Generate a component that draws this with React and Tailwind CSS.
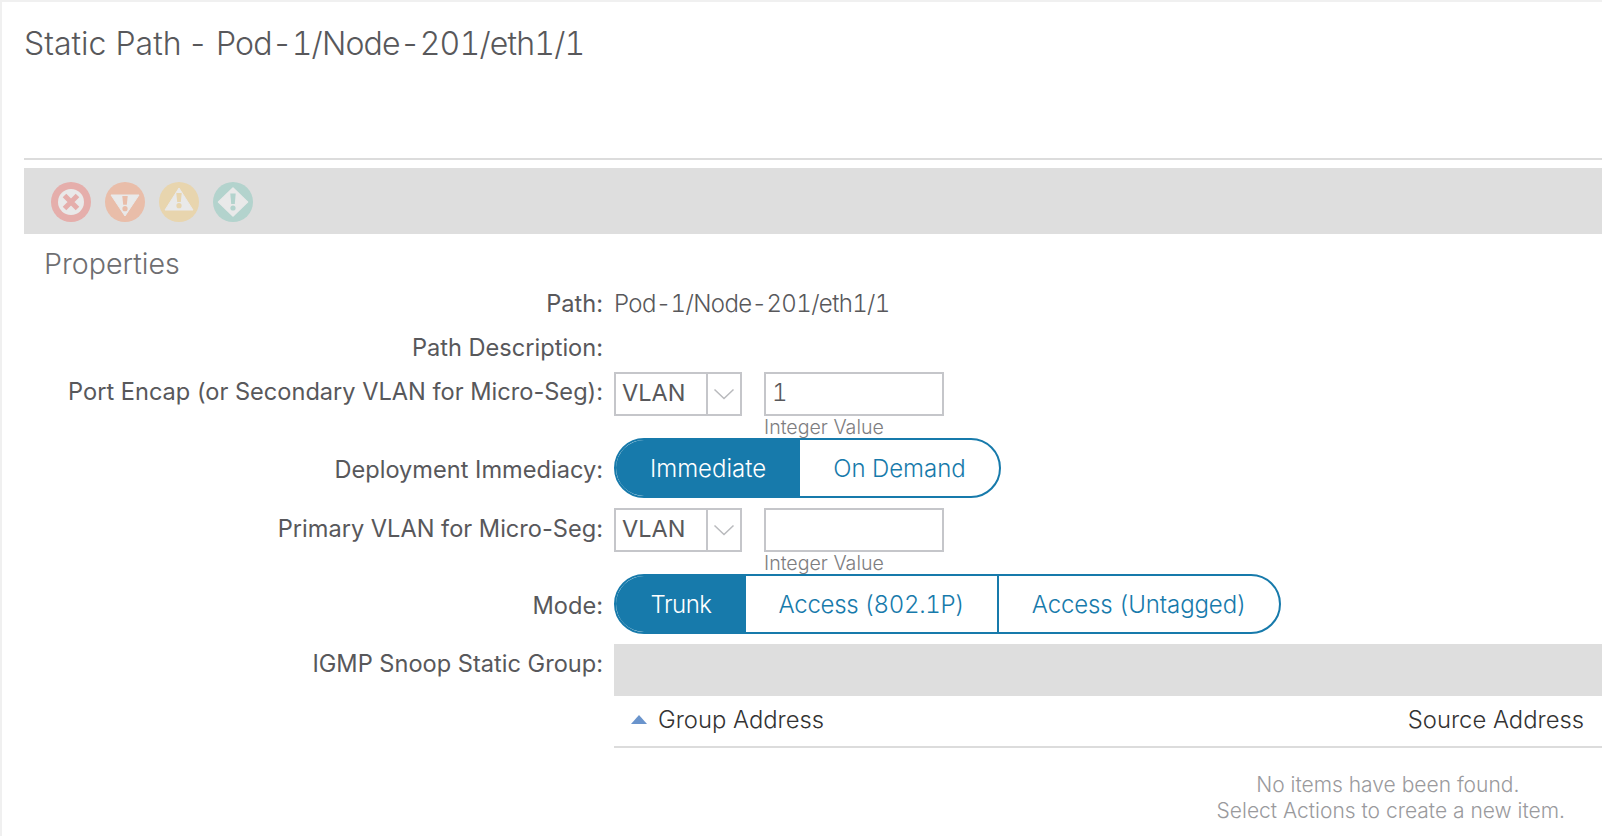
import React from "react";

const font = "font-['Inter','Liberation_Sans',sans-serif]";

const StatusIcon = ({ bg, children }) => (
  <svg width="40" height="40" viewBox="0 0 40 40">
    <circle cx="20" cy="20" r="20" fill={bg} />
    {children}
  </svg>
);

const FormRow = ({ label, className = "", labelClass = "", children }) => (
  <div className={`flex ${className}`}>
    <div className={`w-[579px] shrink-0 text-right text-[23.6px] leading-[30px] font-normal text-[#58585b] ${labelClass}`}>
      {label}
    </div>
    <div className="ml-[11px] min-w-0 flex-1">{children}</div>
  </div>
);

const EncapField = ({ value }) => (
  <div className="flex items-start">
    <div className="flex h-[44px] w-[128px] border-2 border-[#c5c6ca]">
      <div className="flex-1 pl-[6px] text-[23.5px] leading-[38px] text-[#58585b]">VLAN</div>
      <div className="flex w-[34px] items-center justify-center border-l-2 border-[#c5c6ca]">
        <svg width="22" height="12" viewBox="0 0 22 12" fill="none">
          <path d="M1.5 1.5 11 10.5 20.5 1.5" stroke="#b9babd" strokeWidth="1.5" />
        </svg>
      </div>
    </div>
    <div className="ml-[22px]">
      <div className="h-[44px] w-[180px] border-2 border-[#c5c6ca] pl-[6px] text-[24px] leading-[38px] font-light text-[#58585b] tabular-nums">
        {value}
      </div>
      <div className="h-[22px] text-[19.6px] leading-[22px] font-light text-[#7d7d80]">Integer Value</div>
    </div>
  </div>
);

const Toggle = ({ options }) => (
  <div className="flex h-[60px] w-fit overflow-hidden rounded-full border-2 border-[#177aab] text-[24px] font-light tabular-nums">
    {options.map((o) => (
      <div
        key={o.label}
        className={`flex items-center justify-center pt-[1px] ${o.width} ${o.track || ""} ${
          o.active ? "bg-[#177aab] text-white" : "text-[#177aab]"
        } ${o.divider ? "border-l-2 border-[#177aab]" : ""}`}
      >
        {o.label}
      </div>
    ))}
  </div>
);

export default function App() {
  return (
    <div className={`h-[836px] w-[1602px] overflow-hidden border-t-2 border-l-2 border-[#f0f0f0] bg-white ${font}`}>
      <div className="pl-[22px]">
        <h1 className="h-[156px] pt-[20px] text-[32px] leading-[44px] font-light text-[#58585b]">
          Static Path - <span className="ml-[2px] tracking-[-0.8px] tabular-nums">Pod-1/Node-201/eth1/1</span>
        </h1>
        <div className="h-[2px] bg-[#dcdcdc]" />
        <div className="mt-[8px] flex h-[66px] items-center gap-[14px] bg-[#dedede] pt-[1px] pl-[27px]">
          <StatusIcon bg="#e5aeab">
            <circle cx="20" cy="20" r="13" fill="#e9e9e9" />
            <path d="M13.5 13.5 26.5 26.5M26.5 13.5 13.5 26.5" stroke="#e5aeab" strokeWidth="5" />
          </StatusIcon>
          <StatusIcon bg="#e9bda9">
            <path d="M6 13H34L20 34Z" fill="#e9e9e9" stroke="#e9e9e9" strokeWidth="1" strokeLinejoin="round" />
            <path d="M17.3 14H22.7L21.8 22.8H18.2Z" fill="#e9bda9" />
            <circle cx="20" cy="26.7" r="2.6" fill="#e9bda9" />
          </StatusIcon>
          <StatusIcon bg="#e8d5ae">
            <path d="M20 6 34 28H6Z" fill="#e9e9e9" stroke="#e9e9e9" strokeWidth="1" strokeLinejoin="round" />
            <path d="M17.3 11H22.7L21.8 20H18.2Z" fill="#e8d5ae" />
            <circle cx="20" cy="23.7" r="2.6" fill="#e8d5ae" />
          </StatusIcon>
          <StatusIcon bg="#b3d3cd">
            <path d="M20 6 34.5 20 20 34 5.5 20Z" fill="#e9e9e9" stroke="#e9e9e9" strokeWidth="1.5" strokeLinejoin="round" />
            <path d="M17.3 11.5H22.7L21.8 22H18.2Z" fill="#b3d3cd" />
            <circle cx="20" cy="26" r="2.6" fill="#b3d3cd" />
          </StatusIcon>
        </div>
        <div className="mt-[12px] h-[36px] pl-[20px] text-[28.6px] leading-[36px] font-light text-[#6e6e71]">Properties</div>

        <FormRow label="Path:" className="mt-[7px] h-[44px]">
          <div className="text-[24px] leading-[30px] font-light tracking-[-0.63px] text-[#58585b] tabular-nums">
            Pod-1/Node-201/eth1/1
          </div>
        </FormRow>
        <FormRow label="Path Description:" className="h-[39px]" />
        <FormRow label="Port Encap (or Secondary VLAN for Micro-Seg):" className="h-[66px]" labelClass="pt-[5px]">
          <EncapField value="1" />
        </FormRow>
        <FormRow label="Deployment Immediacy:" className="h-[70px]" labelClass="pt-[17px]">
          <Toggle
            options={[
              { label: "Immediate", width: "w-[184px]", active: true },
              { label: "On Demand", width: "w-[199px]" },
            ]}
          />
        </FormRow>
        <FormRow label="Primary VLAN for Micro-Seg:" className="h-[66px]" labelClass="pt-[6px]">
          <EncapField value="" />
        </FormRow>
        <FormRow label="Mode:" className="h-[70px]" labelClass="pt-[17px]">
          <Toggle
            options={[
              { label: "Trunk", width: "w-[130px]", active: true, track: "tracking-[-0.5px]" },
              { label: "Access (802.1P)", width: "w-[251px]", track: "tracking-[-0.3px]" },
              { label: "Access (Untagged)", width: "w-[282px]", track: "tracking-[-0.1px]", divider: true },
            ]}
          />
        </FormRow>
        <FormRow label="IGMP Snoop Static Group:" labelClass="pt-[5px]">
          <div className="h-[52px] bg-[#dedede]" />
          <div className="flex h-[52px] items-center justify-between border-b-2 border-[#dcdcdc] pr-[18px] pb-[3px] pl-[17px] text-[23.8px] font-light text-[#333]">
            <div className="flex items-center gap-[11px]">
              <svg width="16" height="9" viewBox="0 0 16 9">
                <path d="M8 0 16 9H0Z" fill="#6a94cc" />
              </svg>
              Group Address
            </div>
            <div>Source Address</div>
          </div>
          <div className="flex justify-end pt-[24px] pr-[37px]">
            <div className="text-center text-[21px] leading-[26px] font-light text-[#9a9a9d]">
              <div className="pr-[6px]">No items have been found.</div>
              <div>Select Actions to create a new item.</div>
            </div>
          </div>
        </FormRow>
      </div>
    </div>
  );
}
